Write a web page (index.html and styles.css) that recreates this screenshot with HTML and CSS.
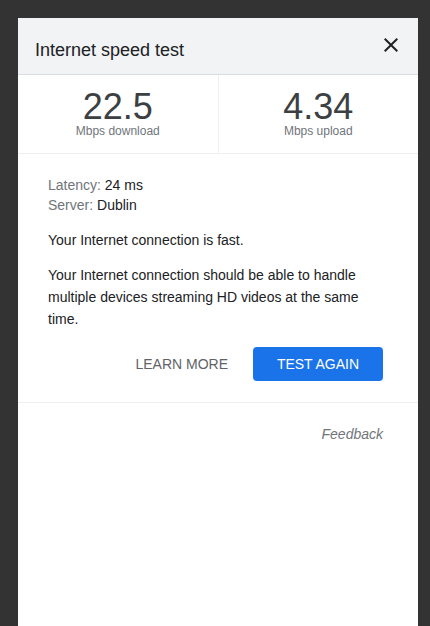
FILE: index.html
```html
<!DOCTYPE html>
<html lang="en">
<head>
<meta charset="utf-8">
<title>Internet speed test</title>
<link rel="stylesheet" href="styles.css">
</head>
<body>
<div class="card">
  <div class="header">
    <div class="title">Internet speed test</div>
    <button class="close" aria-label="Close">
      <svg width="24" height="24" viewBox="0 0 24 24"><path d="M19 6.41L17.59 5 12 10.59 6.41 5 5 6.41 10.59 12 5 17.59 6.41 19 12 13.41 17.59 19 19 17.59 13.41 12z" fill="#202124"/></svg>
    </button>
  </div>
  <div class="stats">
    <div class="stat">
      <div class="num">22.5</div>
      <div class="unit">Mbps download</div>
    </div>
    <div class="stat stat-right">
      <div class="num">4.34</div>
      <div class="unit">Mbps upload</div>
    </div>
  </div>
  <div class="body">
    <div class="meta">
      <div><span class="key">Latency:</span> 24 ms</div>
      <div><span class="key">Server:</span> Dublin</div>
    </div>
    <p class="p1">Your Internet connection is fast.</p>
    <p class="p2">Your Internet connection should be able to handle multiple devices streaming HD videos at the same time.</p>
    <div class="actions">
      <button class="learn">LEARN MORE</button>
      <button class="again">TEST AGAIN</button>
    </div>
  </div>
  <div class="footer">
    <span class="feedback">Feedback</span>
  </div>
</div>
</body>
</html>
```
FILE: styles.css
```css
html, body {
  margin: 0;
  padding: 0;
  background: #333333;
}
body {
  font-family: "Liberation Sans", Arial, sans-serif;
  color: #202124;
  padding: 18px 12px 0 18px;
}
.card {
  width: 400px;
  min-height: 608px;
  background: #ffffff;
  box-sizing: border-box;
}
.header {
  height: 57px;
  box-sizing: border-box;
  background: #f1f3f4;
  border-bottom: 1px solid #dadce0;
  display: flex;
  justify-content: space-between;
  align-items: flex-start;
  padding: 20px 15px 0 17px;
}
.title {
  font-size: 18px;
  line-height: 24px;
  color: #202124;
}
.close {
  background: none;
  border: none;
  padding: 0;
  margin-top: -5px;
  width: 24px;
  height: 24px;
  display: block;
}
.close svg { display: block; }
.stats {
  display: flex;
  border-bottom: 1px solid #efefef;
}
.stat {
  flex: 1;
  text-align: center;
  padding: 14px 0 16px;
}
.stat-right {
  border-left: 1px solid #efefef;
}
.num {
  font-size: 36px;
  line-height: 36px;
  color: #3c4043;
}
.unit {
  font-size: 12px;
  line-height: 12px;
  color: #70757a;
}
.body {
  padding: 21px 35px 21px 30px;
  border-bottom: 1px solid #efefef;
  font-size: 14px;
}
.meta {
  line-height: 20px;
}
.key {
  color: #70757a;
}
.p1 {
  margin: 14px 0 0;
  line-height: 22px;
}
.p2 {
  margin: 13px 0 0;
  line-height: 22px;
}
.actions {
  display: flex;
  justify-content: flex-end;
  align-items: center;
  gap: 25px;
  margin-top: 17px;
}
.actions button {
  font-family: "Liberation Sans", Arial, sans-serif;
  font-size: 14px;
  border: none;
  cursor: pointer;
}
.learn {
  background: none;
  color: #5f6368;
  padding: 0;
}
.again {
  background: #1a73e8;
  color: #ffffff;
  height: 34px;
  width: 130px;
  border-radius: 4px;
  padding: 0;
}
.footer {
  padding: 21px 35px 0 30px;
  text-align: right;
  font-size: 14px;
  line-height: 20px;
}
.feedback {
  font-style: italic;
  color: #70757a;
}
```
